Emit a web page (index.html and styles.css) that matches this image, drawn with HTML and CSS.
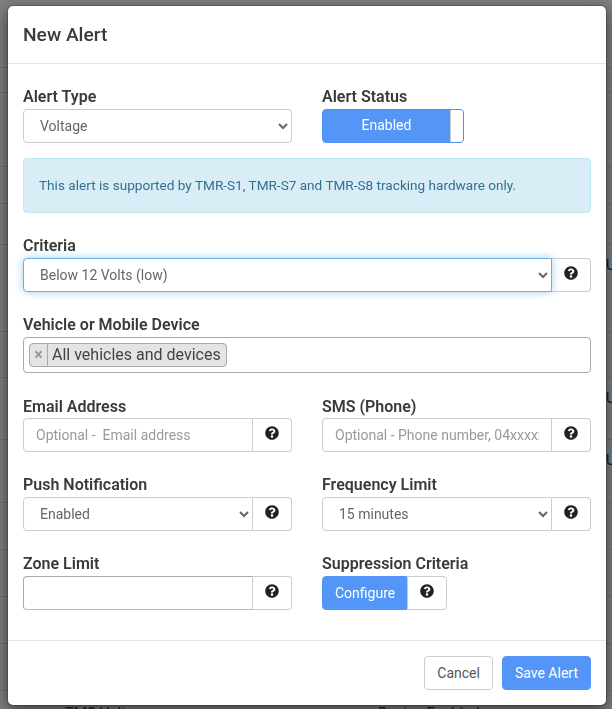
FILE: index.html
```html
<!DOCTYPE html>
<html lang="en">
<head>
<meta charset="utf-8">
<title>New Alert</title>
<link rel="stylesheet" href="styles.css">
</head>
<body>
<svg class="sprite" width="0" height="0" aria-hidden="true">
  <symbol id="q" viewBox="0 0 512 512"><path d="M504 256c0 136.997-111.043 248-248 248S8 392.997 8 256C8 119.083 119.043 8 256 8s248 111.083 248 248zM262.655 90c-54.497 0-89.255 22.957-116.549 63.758-3.536 5.286-2.353 12.415 2.715 16.258l34.699 26.31c5.205 3.947 12.621 3.008 16.665-2.122 17.864-22.658 30.113-35.797 57.303-35.797 20.429 0 45.698 13.148 45.698 32.958 0 14.976-12.363 22.667-32.534 33.976C247.128 238.528 216 254.941 216 296v4c0 6.627 5.373 12 12 12h56c6.627 0 12-5.373 12-12v-1.333c0-28.462 83.186-29.647 83.186-106.667 0-58.002-60.165-102-116.531-102zM256 338c-25.365 0-46 20.635-46 46 0 25.364 20.635 46 46 46s46-20.636 46-46c0-25.365-20.635-46-46-46z"/></symbol>
</svg>

<div class="bg-table">
  <div class="bg-row"></div>
  <div class="bg-row"></div>
  <div class="bg-row"></div>
  <div class="bg-row"></div>
  <div class="bg-row"></div>
  <div class="bg-row bg-text"><span class="c3">U</span></div>
  <div class="bg-row"></div>
  <div class="bg-row bg-text"><span class="c3">U</span></div>
  <div class="bg-row bg-text"><span class="c3">U</span></div>
  <div class="bg-row"></div>
  <div class="bg-row"></div>
  <div class="bg-row"></div>
  <div class="bg-row"></div>
  <div class="bg-row bg-last"><span class="c1">TMS Voltage</span><span class="c2">Device Enabled</span></div>
</div>
<div class="backdrop"></div>

<div class="modal">
  <header class="modal-header"><h4 class="modal-title">New Alert</h4></header>
  <form class="modal-body">
    <div class="cols">
      <div class="group">
        <label class="lbl">Alert Type</label>
        <select class="ctl"><option>Voltage</option></select>
      </div>
      <div class="group">
        <label class="lbl">Alert Status</label>
        <div class="toggle"><span class="toggle-on">Enabled</span><span class="toggle-handle"></span></div>
      </div>
    </div>
    <div class="alert">This alert is supported by TMR-S1, TMR-S7 and TMR-S8 tracking hardware only.</div>
    <div class="group">
      <label class="lbl">Criteria</label>
      <div class="igroup">
        <select class="ctl ctl-join ctl-focus"><option>Below 12 Volts (low)</option></select>
        <span class="addon"><svg class="qi"><use href="#q"/></svg></span>
      </div>
    </div>
    <div class="group">
      <label class="lbl">Vehicle or Mobile Device</label>
      <div class="tagbox"><span class="tag"><span class="tag-x">×</span><span class="tag-text">All vehicles and devices</span></span></div>
    </div>
    <div class="cols">
      <div class="group group-low">
        <label class="lbl">Email Address</label>
        <div class="igroup">
          <input class="ctl ctl-join" type="text" placeholder="Optional -  Email address">
          <span class="addon"><svg class="qi"><use href="#q"/></svg></span>
        </div>
      </div>
      <div class="group group-low">
        <label class="lbl">SMS (Phone)</label>
        <div class="igroup">
          <input class="ctl ctl-join" type="text" placeholder="Optional - Phone number, 04xxxxxxxx">
          <span class="addon"><svg class="qi"><use href="#q"/></svg></span>
        </div>
      </div>
    </div>
    <div class="cols">
      <div class="group">
        <label class="lbl">Push Notification</label>
        <div class="igroup">
          <select class="ctl ctl-join"><option>Enabled</option></select>
          <span class="addon"><svg class="qi"><use href="#q"/></svg></span>
        </div>
      </div>
      <div class="group">
        <label class="lbl">Frequency Limit</label>
        <div class="igroup">
          <select class="ctl ctl-join"><option>15 minutes</option></select>
          <span class="addon"><svg class="qi"><use href="#q"/></svg></span>
        </div>
      </div>
    </div>
    <div class="cols">
      <div class="group">
        <label class="lbl">Zone Limit</label>
        <div class="igroup">
          <input class="ctl ctl-join ctl-dark" type="text">
          <span class="addon"><svg class="qi"><use href="#q"/></svg></span>
        </div>
      </div>
      <div class="group">
        <label class="lbl">Suppression Criteria</label>
        <div class="igroup igroup-inline">
          <button type="button" class="btn btn-primary btn-join">Configure</button>
          <span class="addon addon-full"><svg class="qi"><use href="#q"/></svg></span>
        </div>
      </div>
    </div>
  </form>
  <footer class="modal-footer">
    <button type="button" class="btn btn-default">Cancel</button>
    <button type="button" class="btn btn-primary">Save Alert</button>
  </footer>
</div>
</body>
</html>
```

FILE: styles.css
```css
* { box-sizing: border-box; }
html, body { margin: 0; height: 100%; overflow: hidden; }
body {
  background: #fff;
  font-family: Roboto, "Liberation Sans", sans-serif;
  font-size: 14px;
  line-height: 20px;
  color: #3a3a3a;
}
.sprite { position: absolute; }

/* page behind the dialog */
.bg-table {
  display: grid;
  grid-template-rows: 68px 25px 74px 37px 41px 87px 46px 62px 63px 47px 47px 47px 47px 47px;
}
.bg-row { border-bottom: 1px solid #ddd; }
.bg-text { padding: 10px 0 0 606px; white-space: nowrap; color: #1b2a6b; }
.bg-last { display: flex; padding: 12px 0 0 65px; white-space: nowrap; border-bottom: 0; font-size: 15px; }
.c1 { width: 313px; }
.backdrop { position: fixed; inset: 0; background: rgba(0, 0, 0, .5); }

/* dialog */
.modal {
  position: absolute;
  left: 7px;
  top: 5px;
  width: 600px;
  height: 701px;
  display: flex;
  flex-direction: column;
  background: #fff;
  background-clip: padding-box;
  border: 1px solid rgba(0, 0, 0, .2);
  border-radius: 6px;
  box-shadow: 0 5px 15px rgba(0, 0, 0, .5);
}
.modal-header { padding: 15px; border-bottom: 1px solid #e5e5e5; }
.modal-title { margin: 0; font-size: 19.2px; line-height: 27px; font-weight: 500; }
.modal-body { flex: 1; padding: 0 15px; }
.modal-footer {
  display: flex;
  justify-content: flex-end;
  gap: 9px;
  padding: 15px;
  border-top: 1px solid #e5e5e5;
}

.cols { display: grid; grid-template-columns: 269px 269px; column-gap: 30px; }
.group { padding-top: 22px; min-width: 0; }
.group-low { padding-top: 23px; }
.lbl { display: block; margin-bottom: 1px; font-size: 16px; line-height: 22px; font-weight: 600; }
.group-low .lbl { margin-bottom: 0; }

.ctl {
  display: block;
  width: 100%;
  height: 34px;
  min-width: 0;
  padding: 6px 12px;
  font: inherit;
  color: #666;
  background: #fff;
  border: 1px solid #ccc;
  border-radius: 4px;
  outline: 0;
}
.ctl::placeholder { color: #999; opacity: 1; }
.ctl-join { flex: 1; border-radius: 4px 0 0 4px; }
.ctl-dark { border-color: #aaa #ccc #bbb #aaa; }
.ctl-focus {
  position: relative;
  border-color: #66afe9;
  box-shadow: 0 0 8px rgba(102, 175, 233, .6);
}

.igroup { display: flex; }
.addon {
  display: flex;
  flex: none;
  justify-content: center;
  width: 39px;
  height: 34px;
  padding-top: 7px;
  background: #fff;
  border: 1px solid #ccc;
  border-left: 0;
  border-radius: 0 4px 4px 0;
}
.addon-full { width: 40px; border-left: 1px solid #ccc; }
.qi { width: 14px; height: 14px; fill: #222; }

.toggle {
  display: flex;
  width: 142px;
  height: 34px;
  overflow: hidden;
  background: #5496f8;
  border: 1px solid #4d8ff5;
  border-radius: 4px;
}
.toggle-on { flex: 1; text-align: center; line-height: 30px; color: #fff; }
.toggle-handle { width: 13px; background: #fff; border-left: 1px solid #ccc; }

.alert {
  margin-top: 15px;
  padding: 16px 15px;
  font-size: 13.6px;
  line-height: 21px;
  color: #31708f;
  background: #d9edf7;
  border: 1px solid #bce8f1;
  border-radius: 4px;
}

.tagbox {
  height: 36px;
  padding: 5px;
  border: 1px solid #aaa;
  border-radius: 4px;
}
.tag {
  display: inline-flex;
  height: 24px;
  font-size: 16px;
  line-height: 22px;
  color: #444;
  background: #e4e4e4;
  border: 1px solid #aaa;
  border-radius: 4px;
}
.tag-x {
  width: 18px;
  text-align: center;
  font-weight: 700;
  color: #999;
  border-right: 1px solid #aaa;
}
.tag-text { padding: 0 5px 0 4px; }

.btn {
  height: 34px;
  padding: 6px 12px;
  font: inherit;
  border: 1px solid transparent;
  border-radius: 4px;
}
.btn-primary { color: #fff; background: #5496f8; border-color: #5496f8; }
.btn-default { color: #555; background: #fff; border-color: #ccc; }
.btn-join { padding-right: 11px; border-radius: 4px 0 0 4px; }
```
